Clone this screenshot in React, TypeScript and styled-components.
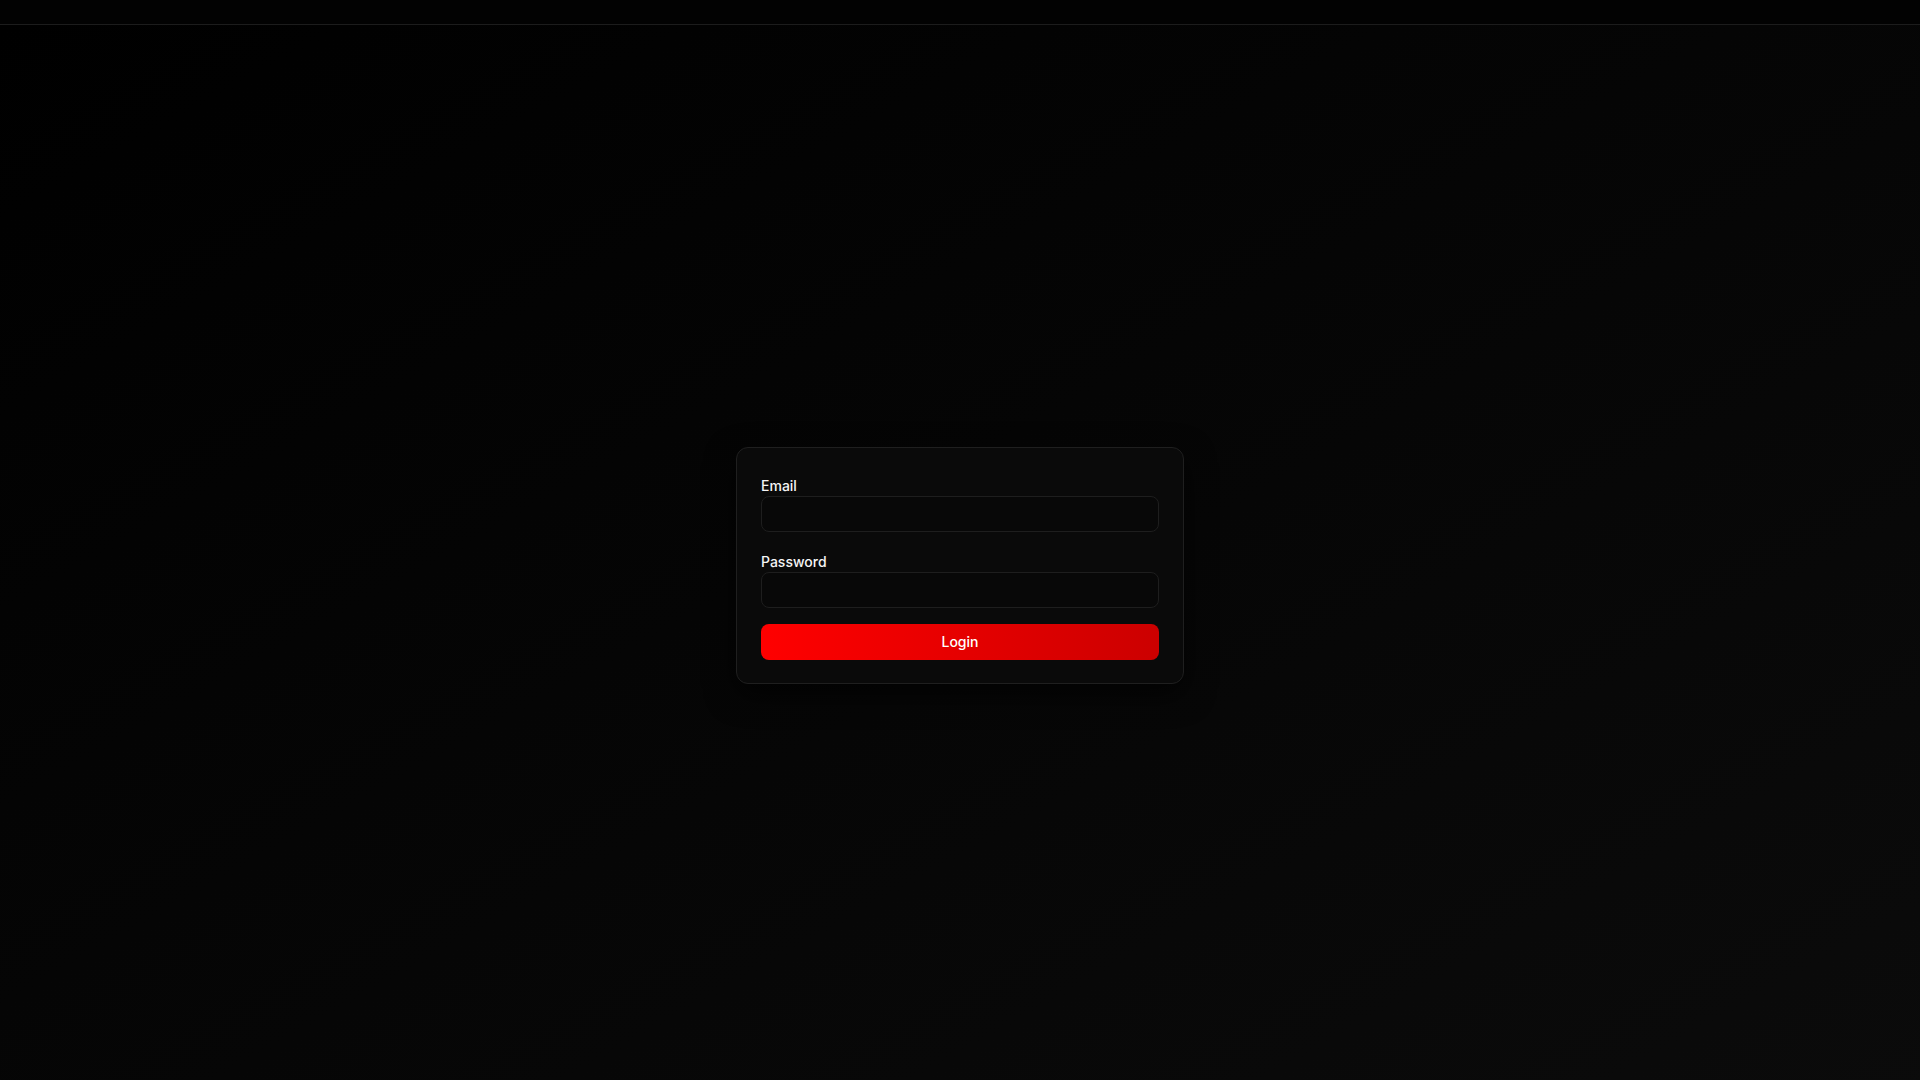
import React from "react";
import styled, { createGlobalStyle } from "styled-components";

const GlobalStyle = createGlobalStyle`
  *, *::before, *::after { box-sizing: border-box; }
  html {
    overflow-y: scroll;
    background: #000;
  }
  html::-webkit-scrollbar { width: 15px; }
  html::-webkit-scrollbar-track { background: #f1f1f1; }
  html::-webkit-scrollbar-thumb {
    background: #c1c1c1;
    border: 2px solid #f1f1f1;
    border-left-width: 3px;
  }
  html::-webkit-scrollbar-button:single-button {
    display: block;
    height: 15px;
    background-color: #f1f1f1;
    background-repeat: no-repeat;
    background-position: center;
    background-size: 8px 5px;
  }
  html::-webkit-scrollbar-button:single-button:vertical:decrement {
    background-image: linear-gradient(to top right, transparent 50%, #a3a3a3 50%),
      linear-gradient(to top left, transparent 50%, #a3a3a3 50%);
    background-size: 4px 5px, 4px 5px;
    background-position: 3px 5px, 7px 5px;
  }
  html::-webkit-scrollbar-button:single-button:vertical:increment {
    background-image: linear-gradient(to bottom right, transparent 50%, #505050 50%),
      linear-gradient(to bottom left, transparent 50%, #505050 50%);
    background-size: 4px 5px, 4px 5px;
    background-position: 3px 5px, 7px 5px;
  }
  body {
    margin: 0;
    padding: 0;
    background: #000;
    font-family: "Inter", "Lato", "Liberation Sans", sans-serif;
    color: #fff;
  }
`;

const Page = styled.div`
  display: flex;
  flex-direction: column;
  background: #000;
`;

const TopBar = styled.header`
  height: 25px;
  background: #020202;
  border-bottom: 1px solid #1c1c1c;
`;

const Main = styled.main`
  min-height: 100vh;
  display: flex;
  align-items: center;
  justify-content: center;
  background: linear-gradient(to bottom right, #000000, #0b0b0b);
`;

const Card = styled.form`
  width: 448px;
  display: flex;
  flex-direction: column;
  padding: 28px 24px 23px;
  background: #0a0a0a;
  border: 1px solid #1f1f1f;
  border-radius: 12px;
  box-shadow: 0 10px 30px rgba(0, 0, 0, 0.7);
`;

const Field = styled.div<{ $gap: number }>`
  display: flex;
  flex-direction: column;
  margin-bottom: ${(p) => p.$gap}px;
`;

const Label = styled.label`
  font-size: 14px;
  line-height: 20px;
  font-weight: 500;
  color: #f5f5f5;
`;

const Input = styled.input`
  height: 36px;
  width: 100%;
  background: #080808;
  border: 1px solid #1e1e1e;
  border-radius: 8px;
  padding: 0 12px;
  color: #fff;
  font-family: inherit;
  font-size: 14px;
  outline: none;
`;

const Button = styled.button`
  height: 36px;
  width: 100%;
  border: none;
  border-radius: 8px;
  background: linear-gradient(to right, #ff0000, #cc0000);
  color: #fff;
  font-family: inherit;
  font-size: 14px;
  font-weight: 500;
  cursor: pointer;
`;

export default function App() {
  return (
    <>
      <GlobalStyle />
      <Page>
        <TopBar />
        <Main>
          <Card onSubmit={(e) => e.preventDefault()}>
            <Field $gap={20}>
              <Label htmlFor="email">Email</Label>
              <Input id="email" type="email" />
            </Field>
            <Field $gap={16}>
              <Label htmlFor="password">Password</Label>
              <Input id="password" type="password" />
            </Field>
            <Button type="submit">Login</Button>
          </Card>
        </Main>
      </Page>
    </>
  );
}
